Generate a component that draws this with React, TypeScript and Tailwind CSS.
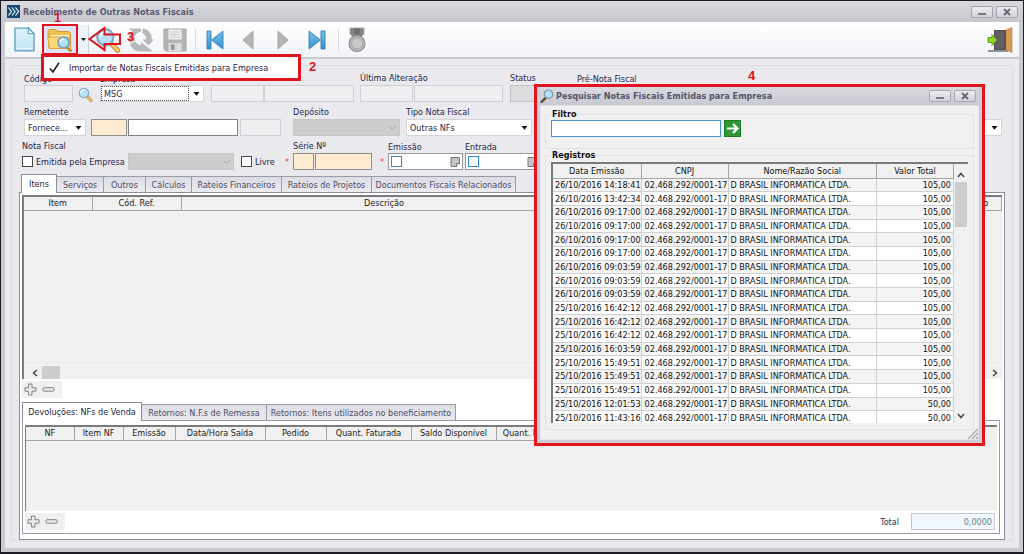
import type { ReactNode } from "react";

const RECORDS: [string, string][] = [
  ["26/10/2016 14:18:41", "105,00"],
  ["26/10/2016 13:42:34", "105,00"],
  ["26/10/2016 09:17:00", "105,00"],
  ["26/10/2016 09:17:00", "105,00"],
  ["26/10/2016 09:17:00", "105,00"],
  ["26/10/2016 09:17:00", "105,00"],
  ["26/10/2016 09:03:59", "105,00"],
  ["26/10/2016 09:03:59", "105,00"],
  ["26/10/2016 09:03:59", "105,00"],
  ["25/10/2016 16:42:12", "105,00"],
  ["25/10/2016 16:42:12", "105,00"],
  ["25/10/2016 16:42:12", "105,00"],
  ["25/10/2016 16:03:59", "105,00"],
  ["25/10/2016 15:49:51", "105,00"],
  ["25/10/2016 15:49:51", "105,00"],
  ["25/10/2016 15:49:51", "105,00"],
  ["25/10/2016 12:01:53", "50,00"],
  ["25/10/2016 11:43:16", "50,00"],
];

const ITEM_TABS: [string, string][] = [
  ["Serviços", "w-[47px]"],
  ["Outros", "w-[42px]"],
  ["Cálculos", "w-[46px]"],
  ["Rateios Financeiros", "w-[90px]"],
  ["Rateios de Projetos", "w-[90px]"],
  ["Documentos Fiscais Relacionados", "w-[144px]"],
];

/* ---------- icons ---------- */

function Lens({ size, className = "" }: { size: string; className?: string }) {
  return (
    <svg viewBox="0 0 24 24" className={`${size} ${className}`}>
      <path d="M14.5 15l6.5 6.5" stroke="#b98a3c" strokeWidth="4.6" strokeLinecap="round" />
      <path d="M15.5 16l5.5 5.5" stroke="#f0c55e" strokeWidth="2.8" strokeLinecap="round" />
      <circle cx="9.5" cy="9.5" r="7.5" fill="#a9dcf6" stroke="#8ba9c2" strokeWidth="2" />
      <circle cx="9.5" cy="9.5" r="5.8" fill="#b5e2f9" />
      <path d="M5 9a5 5 0 0 1 5-4.5" stroke="#fff" strokeWidth="1.8" fill="none" strokeLinecap="round" />
    </svg>
  );
}

function DocIcon() {
  return (
    <svg viewBox="0 0 22 26" className="h-[25px] w-[21px]">
      <defs>
        <linearGradient id="doc" x1="0" y1="0" x2="0" y2="1">
          <stop offset="0" stopColor="#e4f4fc" />
          <stop offset="1" stopColor="#bfe2f3" />
        </linearGradient>
      </defs>
      <path d="M1 1h14l6 6v18H1z" fill="url(#doc)" stroke="#5da0c6" strokeWidth="1.4" />
      <path d="M15 1v6h6z" fill="#fff" stroke="#5da0c6" strokeWidth="1.2" />
      <path d="M3 22.5h16" stroke="#e8f6fc" />
    </svg>
  );
}

function FolderIcon() {
  return (
    <svg viewBox="0 0 26 24" className="h-[24px] w-[26px]">
      <path d="M1 3.5l1-2h7l1.5 2H22l1.5 2V20H2z" fill="#f0bf4c" stroke="#d59a2c" />
      <path d="M4 7h18v10H4z" fill="#fff3cf" />
      <path d="M.8 9h20.7l2 11.5H2.5z" fill="#fbd779" stroke="#dba53a" />
      <path d="M19 18.5l4.5 4" stroke="#c88c32" strokeWidth="3" strokeLinecap="round" />
      <circle cx="16.500" cy="14.500" r="5.500" fill="#aee0f7" stroke="#6f9fc0" strokeWidth="1.5" />
      <path d="M13.5 14a3.200 3.200 0 0 1 3-3" stroke="#fff" strokeWidth="1.4" fill="none" />
    </svg>
  );
}

function RefreshIcon() {
  return (
    <svg viewBox="0 0 26 26" className="size-[26px]" fill="#b9b9b9">
      <path d="M1.500 1.500h11.500v3L9.500 6C6.500 8 6 11 7.500 13.500l-5 2.500C-.5 11.500 1 7 4.500 4.500L1.500 2z" />
      <path d="M14.500 1.500c6 .5 9.500 5 9.300 11H26l-5.500 6-6-6h3.800c0-3-1-5-3.800-6z" />
      <path d="M2 17l5.500-2.500c1 2.500 3 3.800 5.500 3.500v-3l12 9.500H13C7.500 24.500 3.500 22 2 17z" />
    </svg>
  );
}

function SaveIcon() {
  return (
    <svg viewBox="0 0 24 24" className="size-[24px]">
      <path d="M1 1h22v22H3l-2-2z" fill="#b4b4b4" stroke="#a5a5a5" />
      <path d="M5.500 1.500h13v10h-13z" fill="#f1f1f1" />
      <path d="M7 4h10M7 6.500h10M7 9h10" stroke="#c5c5c5" />
      <path d="M5.500 15h13v8h-13z" fill="#dcdcdc" />
      <path d="M8 16.500h3.500V22H8z" fill="#949494" />
    </svg>
  );
}

function EndIcon({ flip = false }: { flip?: boolean }) {
  return (
    <svg viewBox="0 0 18 20" className={flip ? "h-[20px] w-[18px] -scale-x-100" : "h-[20px] w-[18px]"}>
      <defs>
        <linearGradient id="nav" x1="0" y1="0" x2="0" y2="1">
          <stop offset="0" stopColor="#7cc5ee" />
          <stop offset="1" stopColor="#2f8fcb" />
        </linearGradient>
      </defs>
      <path d="M1 1h4v18H1z" fill="url(#nav)" stroke="#3380b2" strokeWidth=".9" />
      <path d="M17 1v18L5.500 10z" fill="url(#nav)" stroke="#3380b2" strokeWidth=".9" />
    </svg>
  );
}

function StepIcon({ flip = false }: { flip?: boolean }) {
  return (
    <svg viewBox="0 0 12 20" className={flip ? "h-[20px] w-[12px] -scale-x-100" : "h-[20px] w-[12px]"}>
      <path d="M11 1v18L1 10z" fill="#b5b5b5" stroke="#a5a5a5" />
    </svg>
  );
}

function MedalIcon() {
  return (
    <svg viewBox="0 0 20 26" className="h-[26px] w-[20px]">
      <path d="M3 1h14v6l-3 3H6L3 7z" fill="#858585" stroke="#a9a9a9" />
      <path d="M7 1.500h6v6H7z" fill="#6f6f6f" />
      <circle cx="10" cy="16.500" r="8" fill="#b9b9b9" stroke="#8d8d8d" strokeWidth="1.2" />
      <circle cx="10" cy="16.500" r="5.500" fill="#c9c9c9" stroke="#a4a4a4" />
    </svg>
  );
}

function DoorIcon() {
  return (
    <svg viewBox="0 0 26 26" className="size-[26px]">
      <path d="M7 3h14v20H7z" fill="#4c4c50" />
      <path d="M8 4h9v18H8z" fill="#5f5f64" />
      <path d="M1 24h20" stroke="#66727a" strokeWidth="1.5" />
      <path d="M19 3l6-2.500v25L19 23z" fill="#d79a55" stroke="#b9793a" strokeWidth=".6" />
      <path d="M1 10.500h4V7.500l5 5.500-5 5.500v-3H1z" fill="#8fd420" stroke="#5d9c10" strokeWidth=".9" />
    </svg>
  );
}

function PlusMinus() {
  return (
    <div className="flex h-[17px] w-[40px] items-center gap-[5px] bg-[#f0f0f0] pl-[2px]">
      <button aria-label="Adicionar">
        <svg viewBox="0 0 13 13" className="size-[13px]">
          <path d="M4.500 1h3.500v3.700H12v3.500H8V12H4.500V8.200H1V4.700h3.500z" fill="#e9e9e9" stroke="#858585" />
        </svg>
      </button>
      <button aria-label="Remover">
        <svg viewBox="0 0 13 13" className="size-[13px]">
          <rect x="1" y="4.700" width="11" height="3.500" rx="1" fill="#e9e9e9" stroke="#858585" />
        </svg>
      </button>
    </div>
  );
}

/* ---------- controls ---------- */

function WindowButtons() {
  return (
    <div className="flex gap-[3px]">
      <button aria-label="Minimizar" className="flex h-[12px] w-[22px] items-center justify-center rounded-[2px] border border-[#a3a4ad] bg-gradient-to-b from-[#ececf1] to-[#d2d3da]">
        <svg viewBox="0 0 8 8" className="size-[8px]"><path d="M0 6h8" stroke="#777883" strokeWidth="2" /></svg>
      </button>
      <button aria-label="Fechar" className="flex h-[12px] w-[22px] items-center justify-center rounded-[2px] border border-[#a3a4ad] bg-gradient-to-b from-[#ececf1] to-[#d2d3da]">
        <svg viewBox="0 0 8 8" className="size-[8px]"><path d="M1 1l6 6M7 1L1 7" stroke="#666772" strokeWidth="1.8" /></svg>
      </button>
    </div>
  );
}

function Field({ label, low = false, children }: { label: string; low?: boolean; children: ReactNode }) {
  return (
    <label className="flex shrink-0 flex-col whitespace-nowrap">
      <span className={low ? "h-[12px] leading-[12px]" : "h-[12px] leading-[10px]"}>{label}</span>
      {children}
    </label>
  );
}

function Box({ name, className }: { name: string; className: string }) {
  return <input aria-label={name} className={`block h-[17px] shrink-0 border px-1 outline-none ${className}`} />;
}

const OFF = "border-[#cfcfd3] bg-[#efeff1]";
const REQUIRED = "border-[#8f8f8f] bg-[#ffecd0]";

function Combo({ name, value, className, disabled = false, focused = false }: { name: string; value: string; className: string; disabled?: boolean; focused?: boolean }) {
  return (
    <span className={`relative block h-[17px] ${className}`}>
      <select
        aria-label={name}
        disabled={disabled}
        className={`block size-full appearance-none border pl-[3px] outline-none ${disabled ? "border-[#c6c6c9] bg-[#cdcdcd]" : "border-[#d4d4da] bg-white"}`}
      >
        <option>{value}</option>
      </select>
      {focused && <span className="pointer-events-none absolute inset-y-[1px] left-[1px] right-[15px] border border-dotted border-[#555]" />}
      <svg viewBox="0 0 7 4" className="pointer-events-none absolute right-[4px] top-[7px] h-[4px] w-[7px]">
        {disabled ? <path d="M.5.5l3 3 3-3" fill="none" stroke="#a3a3a3" /> : <path d="M.5 0h6l-3 3.800z" fill="#111" />}
      </svg>
    </span>
  );
}

function Check({ label, gap }: { label: string; gap: string }) {
  return (
    <label className={`flex h-[17px] shrink-0 items-center whitespace-nowrap ${gap}`}>
      <input type="checkbox" className="size-[11px] appearance-none border border-[#444] bg-white" />
      {label}
    </label>
  );
}

function DateBox({ name }: { name: string }) {
  return (
    <span className="flex h-[17px] w-[75px] items-center justify-between border border-[#999] bg-white px-[2px]">
      <input type="checkbox" aria-label={`Informar ${name}`} className="size-[11px] appearance-none border border-[#2f86d6] bg-white" />
      <button aria-label={`Calendário ${name}`}>
        <svg viewBox="0 0 10 10" className="size-[10px]">
          <path d="M1 .5h8.500v6l-3 3H1z" fill="#c3c3cb" stroke="#777" />
          <path d="M9.500 6.500h-3v3" fill="#fff" stroke="#777" />
        </svg>
      </button>
    </span>
  );
}

function Tab({ text, width, active = false }: { text: string; width: string; active?: boolean }) {
  return (
    <button
      role="tab"
      aria-selected={active}
      className={`whitespace-nowrap border border-b-0 text-center ${width} ${
        active
          ? "relative -mb-px h-[19px] border-[#8c8c9a] bg-white text-[#1c1c40]"
          : "h-[16px] border-l-0 border-[#9a9aa8] bg-gradient-to-b from-[#dcdce4] to-[#ebebf0] text-[#4c4c66]"
      }`}
    >
      {text}
    </button>
  );
}

function HeadCell({ text, className }: { text: string; className: string }) {
  return <th className={`h-[13px] border-b border-r border-[#a5a5a5] p-0 text-center font-normal leading-[12px] ${className}`}>{text}</th>;
}

function Mark({ text, className }: { text: string; className: string }) {
  return <span className={`pointer-events-none absolute font-['Liberation_Sans',sans-serif] text-[13px] font-bold leading-[14px] text-[#e0141e] ${className}`}>{text}</span>;
}

/* ---------- sections ---------- */

function Toolbar() {
  return (
    <div className="relative flex h-[37px] shrink-0 items-center border-b-2 border-[#c5cad2] bg-gradient-to-b from-white to-[#f2f3f8] pl-[9px] pr-[6px]">
      <button aria-label="Novo"><DocIcon /></button>
      <button aria-label="Pesquisar" className="ml-[7px] flex h-[31px] w-[36px] items-center justify-center border-2 border-[#e0141e] bg-[#dfe3f3]"><FolderIcon /></button>
      <button aria-label="Mais opções" className="flex h-[30px] w-[11px] items-center justify-center border-r border-[#ccd0e2] bg-[#f0f2fa]">
        <svg viewBox="0 0 5 3" className="h-[3px] w-[5px]"><path d="M0 0h5L2.500 3z" fill="#111" /></svg>
      </button>
      <button aria-label="Localizar" className="ml-[6px]"><Lens size="size-[26px]" /></button>
      <button aria-label="Atualizar" className="ml-[7px]"><RefreshIcon /></button>
      <button aria-label="Salvar" className="ml-[9px]"><SaveIcon /></button>
      <span className="mx-[8px] h-[22px] w-px bg-[#d9dae0]" />
      <button aria-label="Primeiro" className="ml-[2px]"><EndIcon /></button>
      <button aria-label="Anterior" className="ml-[18px]"><StepIcon /></button>
      <button aria-label="Próximo" className="ml-[23px]"><StepIcon flip /></button>
      <button aria-label="Último" className="ml-[19px]"><EndIcon flip /></button>
      <span className="ml-[12px] mr-[8px] h-[22px] w-px bg-[#d9dae0]" />
      <button aria-label="Certificar"><MedalIcon /></button>
      <button aria-label="Sair" className="ml-auto"><DoorIcon /></button>

      <svg viewBox="0 0 34 26" className="pointer-events-none absolute left-[83px] top-[4px] h-[26px] w-[34px]">
        <path d="M1.500 13L16.500 2v6.500H32v9.500H16.500v6z" fill="none" stroke="#e0141e" strokeWidth="2" />
      </svg>
      <Mark text="1" className="left-[49px] -top-[11px]" />
      <Mark text="3" className="left-[122px] top-[8px]" />
      <div role="menu" className="absolute left-[36px] top-[32px] z-10 flex h-[27px] w-[260px] items-center border-[3px] border-[#e0141e] bg-white">
        <button role="menuitemcheckbox" aria-checked="true" className="flex items-center gap-[9px] whitespace-nowrap pl-[5px] text-[#2b2140]">
          <svg viewBox="0 0 11 11" className="size-[11px]"><path d="M1 6.500L4 10 10 .8" fill="none" stroke="#222" strokeWidth="1.6" /></svg>
          Importar de Notas Fiscais Emitidas para Empresa
        </button>
      </div>
      <Mark text="2" className="left-[304px] top-[38px]" />
    </div>
  );
}

function Form() {
  return (
    <div className="flex flex-col gap-[5px] pl-[12px] text-[#26264a]">
      <div className="flex items-end">
        <Field label="Código" low><Box name="Código" className={`w-[49px] ${OFF}`} /></Field>
        <button aria-label="Buscar código" className="ml-[5px]"><Lens size="size-[15px]" /></button>
        <div className="ml-[7px]"><Field label="Empresa" low><Combo name="Empresa" value="MSG" className="w-[104px]" focused /></Field></div>
        <Box name="Código da empresa" className={`ml-[7px] w-[53px] ${OFF}`} />
        <Box name="Nome da empresa" className={`w-[90px] ${OFF}`} />
        <div className="ml-[6px]">
          <Field label="Última Alteração">
            <span className="flex gap-px">
              <Box name="Última alteração" className={`w-[53px] ${OFF}`} />
              <Box name="Usuário da alteração" className={`w-[89px] ${OFF}`} />
            </span>
          </Field>
        </div>
        <div className="ml-[7px]"><Field label="Status"><Box name="Status" className="w-[60px] border-[#c2c2c6] bg-[#dcdcde]" /></Field></div>
        <div className="ml-[7px]"><Field label="Pré-Nota Fiscal" low><Box name="Pré-Nota Fiscal" className={`w-[90px] ${OFF}`} /></Field></div>
      </div>
      <div className="flex items-end">
        <Field label="Remetente"><Combo name="Remetente" value="Fornece..." className="w-[62px]" /></Field>
        <Box name="Código do remetente" className={`ml-[5px] w-[36px] ${REQUIRED}`} />
        <Box name="Nome do remetente" className="ml-px w-[110px] border-[#808080] bg-white" />
        <Box name="UF do remetente" className={`ml-[2px] w-[41px] ${OFF}`} />
        <div className="ml-[12px]"><Field label="Depósito"><Combo name="Depósito" value="" disabled className="w-[107px]" /></Field></div>
        <div className="ml-[6px]"><Field label="Tipo Nota Fiscal"><Combo name="Tipo Nota Fiscal" value="Outras NFs" className="w-[126px]" /></Field></div>
        <Combo name="Natureza" value="" className="ml-[8px] mr-[10px] flex-1" />
      </div>
      <div className="flex items-end">
        <div className="-ml-[2px] flex flex-col">
          <span className="h-[12px] leading-[10px]">Nota Fiscal</span>
          <div className="flex">
            <Check label="Emitida pela Empresa" gap="w-[106px] gap-[3px]" />
            <Combo name="Série própria" value="" disabled className="w-[106px]" />
          </div>
        </div>
        <div className="ml-[7px]"><Check label="Livre" gap="w-[44px] gap-[3px]" /></div>
        <span className="w-[8px] leading-[15px] text-[#f04040]">*</span>
        <Field label="Série Nº">
          <span className="flex gap-px">
            <Box name="Série" className={`w-[21px] ${REQUIRED}`} />
            <Box name="Número" className={`w-[57px] ${REQUIRED}`} />
          </span>
        </Field>
        <span className="ml-[8px] w-[8px] leading-[15px] text-[#f04040]">*</span>
        <div className="flex gap-[2px]">
          <Field label="Emissão" low><DateBox name="emissão" /></Field>
          <Field label="Entrada" low><DateBox name="entrada" /></Field>
        </div>
      </div>
    </div>
  );
}

function ItemsPane() {
  return (
    <div className="flex flex-1 flex-col">
      <div role="tablist" className="flex items-end pl-[2px]">
        <Tab text="Itens" width="w-[36px]" active />
        {ITEM_TABS.map(([text, width]) => <Tab key={text} text={text} width={width} />)}
      </div>
      <div className="flex flex-1 flex-col border border-[#8c8c9a] bg-white p-[2px] pb-[5px]">
        <div className="flex flex-1 flex-col border-l-2 border-t-2 border-[#7b7b7b] bg-[#f0f0f0]">
          <table className="w-full table-fixed border-collapse">
            <thead>
              <tr>
                <HeadCell text="Item" className="w-[68px]" />
                <HeadCell text="Cód. Ref." className="w-[89px]" />
                <HeadCell text="Descrição" className="w-[406px]" />
                <HeadCell text="" className="" />
                <HeadCell text="Desconto" className="w-[64px]" />
              </tr>
            </thead>
          </table>
          <div className="mt-auto flex h-[14px] items-center justify-between border-t border-[#f8f8f8] pl-[8px] pr-[4px]">
            <div className="flex items-center gap-[4px]">
              <button aria-label="Rolar para a esquerda"><svg viewBox="0 0 6 8" className="h-[8px] w-[6px]"><path d="M5 1L1.500 4 5 7" fill="none" stroke="#444" strokeWidth="1.5" /></svg></button>
              <span className="h-[13px] w-[18px] bg-[#cdcdcd]" />
            </div>
            <button aria-label="Rolar para a direita"><svg viewBox="0 0 6 8" className="h-[8px] w-[6px]"><path d="M1 1l3.500 3L1 7" fill="none" stroke="#444" strokeWidth="1.5" /></svg></button>
          </div>
        </div>
        <div className="pt-[2px]"><PlusMinus /></div>
        <div role="tablist" className="mt-[4px] flex items-end">
          <Tab text="Devoluções: NFs de Venda" width="w-[120px]" active />
          <Tab text="Retornos: N.F.s de Remessa" width="w-[125px]" />
          <Tab text="Retornos: Itens utilizados no beneficiamento" width="w-[189px]" />
        </div>
        <div className="mr-[2px] flex flex-col border border-[#9a9aa4] bg-white px-[2px] pb-[3px] pt-[4px]">
          <div className="h-[86px] border-l border-t-2 border-[#7b7b7b] bg-[#f0f0f0]">
            <table className="table-fixed border-collapse">
              <thead>
                <tr>
                  <HeadCell text="NF" className="w-[48px]" />
                  <HeadCell text="Item NF" className="w-[49px]" />
                  <HeadCell text="Emissão" className="w-[52px]" />
                  <HeadCell text="Data/Hora Saída" className="w-[90px]" />
                  <HeadCell text="Pedido" className="w-[61px]" />
                  <HeadCell text="Quant. Faturada" className="w-[85px]" />
                  <HeadCell text="Saldo Disponível" className="w-[85px]" />
                  <HeadCell text="Quant. Devolvida" className="w-[84px]" />
                </tr>
              </thead>
            </table>
          </div>
          <div className="flex items-center justify-between pr-[2px] pt-[2px]">
            <PlusMinus />
            <label className="flex items-center gap-[12px] text-[#33334f]">
              Total
              <input readOnly value="0,0000" className="h-[17px] w-[84px] border border-[#c3c9d2] bg-[#f0f7fe] px-[2px] text-right text-[#6c7c92] outline-none" />
            </label>
          </div>
        </div>
      </div>
    </div>
  );
}

function SearchDialog() {
  return (
    <section role="dialog" aria-label="Pesquisar Notas Fiscais Emitidas para Empresa" className="absolute right-[38px] top-[83px] z-20 flex w-[451px] flex-col border-[3px] border-[#e0141e] bg-[#cdced6] px-[3px] pb-[3px] text-[#111]">
      <Mark text="4" className="left-[211px] -top-[18px]" />
      <header className="flex h-[18px] items-center justify-between bg-gradient-to-b from-[#d9d9e0] to-[#c9cad1] pr-[3px]">
        <h2 className="flex items-center gap-[2px] font-bold text-[#55556b]">
          <svg viewBox="0 0 14 14" className="size-[14px]">
            <path d="M6 8.500L1.500 13" stroke="#5a4632" strokeWidth="2.4" strokeLinecap="round" />
            <circle cx="8.500" cy="5.200" r="4.200" fill="#b5e3fa" stroke="#7f98ae" strokeWidth="1.2" />
          </svg>
          Pesquisar Notas Fiscais Emitidas para Empresa
        </h2>
        <WindowButtons />
      </header>
      <div className="relative border border-[#e2e2e8] bg-[#f0f0f0] px-[4px] pb-[9px] pt-[2px]">
        <fieldset className="h-[41px] border border-[#e2e2e4] px-[5px]">
          <legend className="px-[1px] font-bold leading-[12px]">Filtro</legend>
          <div className="flex items-center gap-[3px]">
            <input aria-label="Filtro" className="h-[17px] w-[170px] border border-[#4c8fd3] bg-white px-1 outline-none" />
            <button aria-label="Buscar">
              <svg viewBox="0 0 17 17" className="size-[17px]">
                <path d="M0 0h17v17H0z" fill="#2f9a35" />
                <path d="M.5.5h16v16H.5z" fill="none" stroke="#1f7a28" />
                <path d="M3 8.500h10M9 4l4.500 4.500L9 13" fill="none" stroke="#fff" strokeWidth="2.2" />
              </svg>
            </button>
          </div>
        </fieldset>
        <fieldset className="border border-[#e2e2e4] px-[5px] pb-[6px]">
          <legend className="px-[1px] font-bold leading-[12px]">Registros</legend>
          <div className="mt-px flex h-[261px] overflow-hidden border-l-2 border-t-2 border-[#7b7b7b]">
            <table className="h-[261px] flex-1 table-fixed border-collapse">
              <thead>
                <tr className="h-[14px]">
                  <HeadCell text="Data Emissão" className="w-[88px]" />
                  <HeadCell text="CNPJ" className="w-[86px]" />
                  <HeadCell text="Nome/Razão Social" className="" />
                  <HeadCell text="Valor Total" className="w-[77px]" />
                </tr>
              </thead>
              <tbody>
                {RECORDS.map(([date, value], i) => (
                  <tr key={i} className="whitespace-nowrap leading-[12px] odd:bg-[#f4f4f4] even:bg-white">
                    <td className="border-b border-r border-[#d0d0d0] p-0 pl-[2px]">{date}</td>
                    <td className="border-b border-r border-[#d0d0d0] p-0 pl-[3px]">02.468.292/0001-17</td>
                    <td className="border-b border-r border-[#d0d0d0] p-0 pl-[2px]">D BRASIL INFORMATICA LTDA.</td>
                    <td className="border-b border-r border-[#d0d0d0] p-0 pr-[2px] text-right">{value}</td>
                  </tr>
                ))}
              </tbody>
            </table>
            <div className="flex w-[14px] shrink-0 flex-col items-center border-t-[4px] border-[#f0f0f0] bg-[#f0f0f0]">
              <button aria-label="Rolar para cima" className="h-[14px]"><svg viewBox="0 0 8 6" className="h-[6px] w-[8px]"><path d="M1 5l3-3.500L7 5" fill="none" stroke="#444" strokeWidth="1.5" /></svg></button>
              <span className="h-[45px] w-[12px] bg-[#cdcdcd]" />
              <button aria-label="Rolar para baixo" className="mt-auto h-[14px]"><svg viewBox="0 0 8 6" className="h-[6px] w-[8px]"><path d="M1 1l3 3.500L7 1" fill="none" stroke="#444" strokeWidth="1.5" /></svg></button>
            </div>
          </div>
        </fieldset>
        <svg viewBox="0 0 10 10" className="absolute bottom-0 right-0 size-[10px]">
          <path d="M0 10L10 0M4 10l6-6M8 10l2-2" stroke="#9a9aa6" strokeWidth="1.2" />
        </svg>
      </div>
    </section>
  );
}

export default function App() {
  return (
    <main className="relative flex min-h-screen flex-col border border-b-2 border-[#1d1b26] bg-[#c9cad2] px-[4px] pb-[4px] font-['DejaVu_Sans_Condensed','DejaVu_Sans',sans-serif] text-[9px] leading-[12px] text-[#222]">
      <header className="-mx-[4px] flex h-[21px] shrink-0 items-center justify-between bg-gradient-to-b from-[#dadae1] to-[#c6c7ce] pl-[6px] pr-[5px]">
        <h1 className="flex items-center gap-[3px] font-bold text-[#5b5b70]">
          <svg viewBox="0 0 13 13" className="size-[13px]">
            <path d="M0 0h13v13H0z" fill="#174a72" />
            <path d="M1.500 2.500l3 4-3 4M5 2.500l3 4-3 4M8.500 2.500l3 4-3 4" fill="none" stroke="#e8f4fb" strokeWidth="1.2" />
          </svg>
          Recebimento de Outras Notas Fiscais
        </h1>
        <WindowButtons />
      </header>
      <Toolbar />
      <div className="flex flex-1 flex-col bg-[#e9e9ee] px-[6px] pb-[7px] pt-[6px]">
        <div className="flex flex-1 flex-col border border-[#dcdce2] px-[7px] pt-[7px]">
          <div className="-mx-[7px] mb-[4px]"><Form /></div>
          <ItemsPane />
        </div>
      </div>
      <SearchDialog />
    </main>
  );
}
